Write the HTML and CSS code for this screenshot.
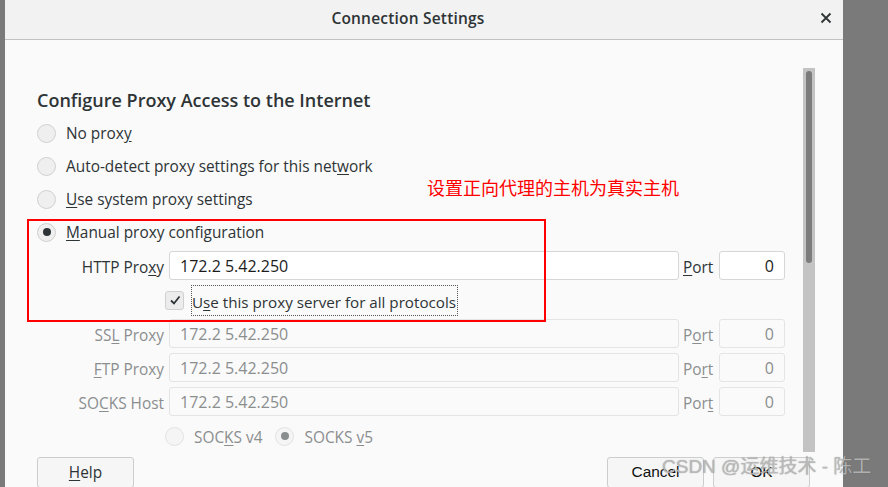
FILE: index.html
```html
<!DOCTYPE html>
<html>
<head>
<meta charset="utf-8">
<link rel="stylesheet" href="styles.css">
</head>
<body>
<div class="screen">
  <div class="behind"></div>
  <div class="dialog">
    <div class="titlebar">
      <span class="title">Connection Settings</span>
      <span class="close">
        <svg width="12" height="12" viewBox="0 0 12 12"><path d="M1.5 1.5 L10.5 10.5 M10.5 1.5 L1.5 10.5" stroke="#2e3436" stroke-width="1.8" fill="none"/></svg>
      </span>
    </div>
    <div class="body">
      <div class="scrollarea">
        <div class="content">
          <div class="heading">Configure Proxy Access to the Internet</div>
          <div class="radios">
            <div class="radio-row"><span class="radio"></span><span>No prox<u>y</u></span></div>
            <div class="radio-row"><span class="radio"></span><span>Auto-detect proxy settings for this net<u>w</u>ork</span></div>
            <div class="radio-row"><span class="radio"></span><span><u>U</u>se system proxy settings</span></div>
            <div class="radio-row"><span class="radio checked"></span><span><u>M</u>anual proxy configuration</span></div>
          </div>
          <div class="form">
            <div class="lbl">HTTP Pro<u>x</u>y</div>
            <div class="input">172.2 5.42.250</div>
            <div class="plbl"><u>P</u>ort</div>
            <div class="input port">0</div>

            <div class="check-row">
              <span class="checkbox"><svg width="12" height="12" viewBox="0 0 12 12"><path d="M2 6.5 L5 9.5 L10.5 2.5" stroke="#2e3436" stroke-width="1.8" fill="none"/></svg></span>
              <span class="focus">U<u>s</u>e this proxy server for all protocols</span>
            </div>

            <div class="lbl dis">SS<u>L</u> Proxy</div>
            <div class="input dis">172.2 5.42.250</div>
            <div class="plbl dis">P<u>o</u>rt</div>
            <div class="input port dis">0</div>

            <div class="lbl dis"><u>F</u>TP Proxy</div>
            <div class="input dis">172.2 5.42.250</div>
            <div class="plbl dis">Po<u>r</u>t</div>
            <div class="input port dis">0</div>

            <div class="lbl dis">SO<u>C</u>KS Host</div>
            <div class="input dis">172.2 5.42.250</div>
            <div class="plbl dis">Por<u>t</u></div>
            <div class="input port dis">0</div>

            <div class="socks-row">
              <span class="radio dis"></span><span class="dis stext">SOC<u>K</u>S v4</span>
              <span class="radio dis checked-dis"></span><span class="dis">SOCKS <u>v</u>5</span>
            </div>
          </div>
        </div>
        <div class="scrollbar"><div class="thumb"></div></div>
      </div>
      <div class="buttons">
        <div class="btn"><u>H</u>elp</div>
        <div class="spacer"></div>
        <div class="btn plain">Cancel</div>
        <div class="btn plain">OK</div>
      </div>
    </div>
  </div>
  <div class="backdrop"></div>

  <div class="redbox"></div>
  <div class="note">设置正向代理的主机为真实主机</div>
  <div class="watermark">CSDN @运维技术 - 陈工</div>
</div>
</body>
</html>
```

FILE: styles.css
```css
* { box-sizing: border-box; }
html, body { margin: 0; padding: 0; }
body {
  width: 888px;
  height: 487px;
  overflow: hidden;
  background: #7a7a7a;
  font-family: "Open Sans", "Noto Sans", sans-serif;
  color: #2e3436;
}
u { text-decoration: underline; text-underline-offset: 2px; }
.screen {
  position: relative;
  display: flex;
  width: 888px;
  height: 487px;
}
.behind { width: 5px; background: #7a7a7a; flex: none; }
.backdrop { flex: 1; background: #7a7a7a; }
.dialog {
  width: 838px;
  flex: none;
  display: flex;
  flex-direction: column;
  background: #fafafa;
}
.titlebar {
  height: 40px;
  flex: none;
  background: #f2f2f2;
  border-bottom: 1px solid #c2c2c2;
  display: flex;
  align-items: center;
  justify-content: center;
  position: relative;
}
.title {
  font-size: 15.5px;
  font-weight: 600;
  color: #2e3436;
  margin-right: 32px;
  margin-top: -3px;
  letter-spacing: 0.2px;
}
.close {
  position: absolute;
  right: 11px;
  top: 12px;
  width: 12px;
  height: 12px;
  display: flex;
}
.body {
  flex: 1;
  display: flex;
  flex-direction: column;
  padding-top: 28px;
}
.scrollarea {
  height: 384px;
  flex: none;
  display: flex;
}
.content {
  flex: 1;
  padding-left: 32px;
  padding-top: 21px;
}
.scrollbar {
  width: 12px;
  margin-right: 28px;
  background: #c3c3c3;
  padding: 3px 3px;
}
.thumb {
  width: 6px;
  height: 192px;
  background: #7c7c7c;
  border-radius: 3px;
}
.heading {
  font-size: 18px;
  font-weight: 600;
  line-height: 22px;
  height: 22px;
  color: #2e3436;
}
.radios { margin-top: 5px; }
.radio-row {
  height: 33px;
  display: flex;
  align-items: center;
  font-size: 15.4px;
  gap: 10px;
  padding-top: 1px;
}
.radio {
  width: 19px;
  height: 19px;
  border-radius: 50%;
  border: 1px solid #d0d0d0;
  background: #efefef;
  flex: none;
  display: flex;
  align-items: center;
  justify-content: center;
}
.radio.checked::after {
  content: "";
  width: 8px;
  height: 8px;
  border-radius: 50%;
  background: #2e3436;
}
.radio.dis { border-color: #e2e2e2; background: #f5f5f5; }
.radio.checked-dis::after {
  content: "";
  width: 8px;
  height: 8px;
  border-radius: 50%;
  background: #8b8e8f;
}
.form {
  margin-top: 3px;
  display: grid;
  grid-template-columns: 127px 510px 30px 66px;
  column-gap: 5px;
  grid-auto-rows: 29px;
  row-gap: 5px;
  font-size: 15.4px;
  align-items: center;
}
.form > .plbl { margin-left: -1px; }
.lbl { text-align: right; color: #2e3436; padding-top: 3px; }
.plbl { color: #2e3436; padding-top: 3px; }
.input {
  height: 29px;
  background: #ffffff;
  border: 1px solid #d6d6d6;
  border-radius: 3px;
  padding-left: 10px;
  font-size: 16px;
  line-height: 29px;
  color: #1c1c1c;
}
.input.port { text-align: right; padding-left: 0; padding-right: 10px; }
.dis { color: #8b8e8f; }
.input.dis { background: #fafafa; border-color: #e4e4e4; color: #8b8e8f; }
.check-row {
  grid-column: 1 / -1;
  display: flex;
  align-items: center;
  padding-left: 128px;
  gap: 8px;
  height: 29px;
  padding-top: 1px;
}
.checkbox {
  width: 19px;
  height: 19px;
  border: 1px solid #d0d0d0;
  border-radius: 3px;
  background: #ececec;
  display: flex;
  align-items: center;
  justify-content: center;
  flex: none;
}
.focus {
  border: 1px dotted #555;
  padding: 3px 1px 0 0;
  line-height: 22px;
  height: 31px;
  display: flex;
  align-items: center;
  margin-left: -1px;
  font-size: 15.2px;
}
.socks-row {
  grid-column: 1 / -1;
  display: flex;
  align-items: center;
  padding-left: 128px;
  gap: 10px;
  height: 29px;
  margin-top: 1px;
}
.socks-row > span:not(.radio) { padding-top: 2px; }
.socks-row .stext { margin-right: 3px; }
.buttons {
  margin-top: 5px;
  display: flex;
  padding-left: 32px;
  padding-right: 33px;
  gap: 9px;
}
.spacer { flex: 1; }
.btn {
  width: 97px;
  height: 31px;
  border: 1px solid #cdcdcd;
  border-radius: 3px;
  background: #f6f6f6;
  display: flex;
  align-items: center;
  justify-content: center;
  font-size: 15.4px;
  color: #2e3436;
  padding-bottom: 1px;
}
.btn.plain {
  font-family: "Liberation Sans", Arial, sans-serif;
  color: #111;
}
.redbox {
  position: absolute;
  left: 27px;
  top: 219px;
  width: 519px;
  height: 103px;
  border: 2px solid #ff0000;
}
.note {
  position: absolute;
  left: 427px;
  top: 175px;
  font-family: "Noto Sans CJK SC", sans-serif;
  font-size: 18px;
  line-height: 24px;
  color: #ff0000;
}
.watermark {
  position: absolute;
  left: 662px;
  top: 454px;
  font-family: "Liberation Sans", "Noto Sans CJK SC", sans-serif;
  font-size: 19px;
  line-height: 26px;
  color: rgba(190, 190, 190, 0.85);
  text-shadow: 0 0 1px rgba(90, 90, 90, 0.6);
}
```
